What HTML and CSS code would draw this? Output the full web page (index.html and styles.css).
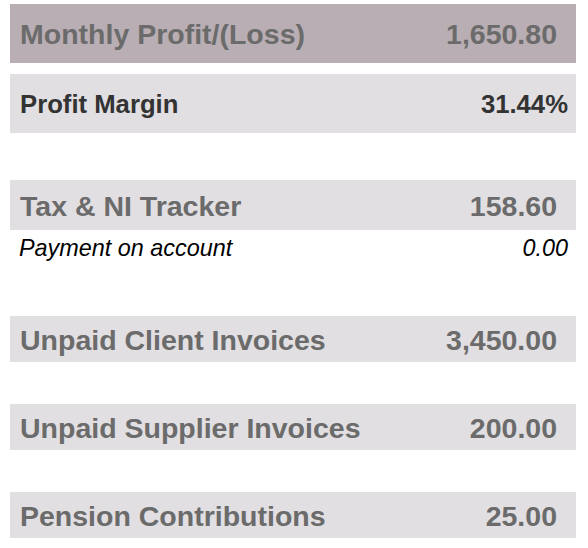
FILE: index.html
```html
<!DOCTYPE html>
<html>
<head>
<meta charset="utf-8">
<link rel="stylesheet" href="styles.css">
</head>
<body>
<div class="summary">
  <div class="row row-primary">
    <span class="label">Monthly Profit/(Loss)</span>
    <span class="value">1,650.80</span>
  </div>
  <div class="row row-margin">
    <span class="label">Profit Margin</span>
    <span class="value">31.44%</span>
  </div>
  <div class="group group-tax">
    <div class="row row-tax">
      <span class="label">Tax &amp; NI Tracker</span>
      <span class="value">158.60</span>
    </div>
    <div class="subrow">
      <span class="label">Payment on account</span>
      <span class="value">0.00</span>
    </div>
  </div>
  <div class="row row-std row-client">
    <span class="label">Unpaid Client Invoices</span>
    <span class="value">3,450.00</span>
  </div>
  <div class="row row-std">
    <span class="label">Unpaid Supplier Invoices</span>
    <span class="value">200.00</span>
  </div>
  <div class="row row-std">
    <span class="label">Pension Contributions</span>
    <span class="value">25.00</span>
  </div>
</div>
</body>
</html>
```
FILE: styles.css
```css
html, body {
  margin: 0;
  padding: 0;
  background: #ffffff;
}
body {
  font-family: "Liberation Sans", Arial, Helvetica, sans-serif;
}
.summary {
  margin: 4px 12px 0 10px;
  display: flex;
  flex-direction: column;
}
.row {
  display: flex;
  justify-content: space-between;
  align-items: center;
  padding: 2px 19px 0 10px;
  background: #e1dfe2;
  color: #6b6b6b;
  font-weight: bold;
  font-size: 28.5px;
  box-sizing: border-box;
}
.row-primary {
  height: 59px;
  background: #b8aeb3;
}
.row-margin {
  height: 59px;
  margin-top: 11px;
  font-size: 25.7px;
  color: #333333;
  padding-right: 8px;
}
.group-tax {
  margin-top: 47px;
}
.row-tax {
  height: 50px;
}
.subrow {
  display: flex;
  justify-content: space-between;
  align-items: center;
  padding: 1px 8px 0 9px;
  height: 36px;
  box-sizing: border-box;
  font-style: italic;
  font-size: 23.4px;
  color: #000000;
}
.row-std {
  height: 46px;
  margin-top: 42px;
}
.row-client {
  margin-top: 50px;
}
```
